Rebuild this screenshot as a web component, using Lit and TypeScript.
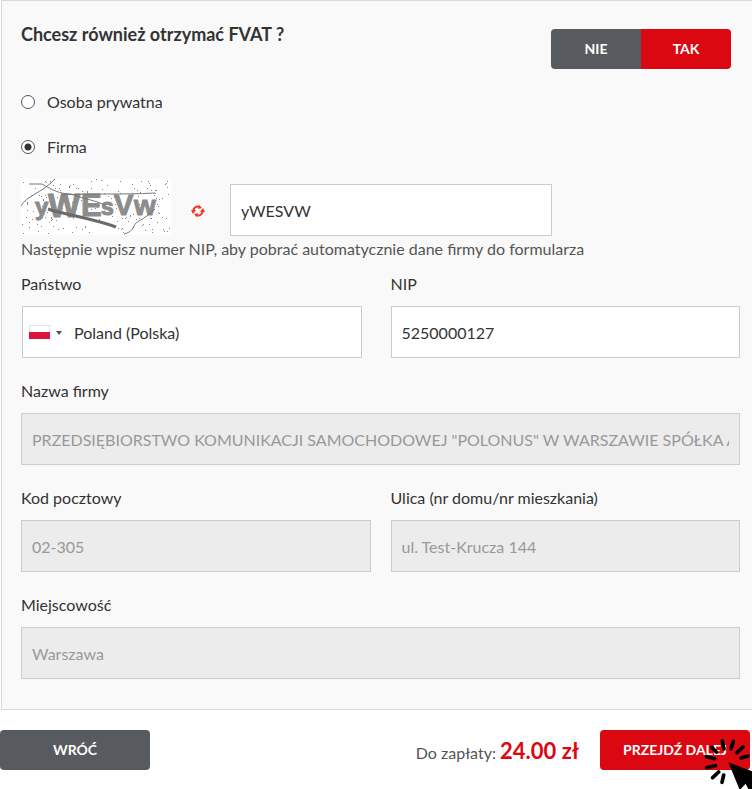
import { LitElement, html, css, svg } from "lit";
import { customElement, state } from "lit/decorators.js";

/** Seeded generator, so the captcha noise is stable between renders. */
function speckles(count: number) {
  let seed = 20477;
  const next = () => (seed = (seed * 16807) % 2147483647) / 2147483647;
  let d = "";
  for (let i = 0; i < count; i++) {
    d += `M${Math.round(next() * 148)} ${Math.round(next() * 54)}h1v1h-1z`;
  }
  return d;
}

@customElement("captcha-image")
class CaptchaImage extends LitElement {
  static styles = css`
    :host { display: block; flex: none; }
    svg { display: block; background: #fff; }
    .glyphs { font-family: "Liberation Sans", Arial, sans-serif; font-weight: 700; fill: #8c8c8c; stroke: #8c8c8c; }
    .line { fill: none; stroke: #777; }
    .bar { fill: none; stroke: #6a6a6a; stroke-width: 3; }
    .noise { fill: #888; }
  `;
  render() {
    return html`<svg width="150" height="56" viewBox="0 0 150 56" role="img" aria-label="Captcha">
      <path class="noise" d=${speckles(190)}></path>
      <g class="glyphs">
        <text x="14" y="36" font-size="24">y</text>
        <text x="27" y="38" font-size="34">W</text>
        <text x="60" y="37" font-size="31">E</text>
        <text x="80" y="36" font-size="23">s</text>
        <text x="93" y="36" font-size="29">V</text>
        <text x="113" y="36" font-size="28">w</text>
      </g>
      ${svg`
        <path class="line" d="M0 27C5 17 21 14 34 0M8 5h13c10 6 18 10 29 10 9 4 20 5 34 11M40 16c30-2 60 0 94-2M103 55c12-3 7-9 15-13 6-3 10-7 16-12"></path>
        <path class="bar" d="M27 30C45 36 70 39 95 48"></path>`}
    </svg>`;
  }
}

@customElement("app-root")
class AppRoot extends LitElement {
  static styles = css`
    * { box-sizing: border-box; }
    :host {
      display: block;
      background: #fff;
      color: #333;
      font: 16px/24px Lato, "Open Sans", sans-serif;
    }
    .panel {
      margin-left: 1px;
      padding: 20px 12px 30px 19px;
      border: 1px solid #d9d9d9;
      border-right: 0;
      background: #f9f9f9;
    }
    .head { display: flex; justify-content: space-between; padding-right: 9px; }
    h1 { margin: 0; font-size: 18px; line-height: 26px; font-weight: 700; }
    button {
      border: 0;
      padding: 0;
      height: 40px;
      border-radius: 4px;
      font: 700 14px/20px Lato, sans-serif;
      color: #fff;
      background: #575a5e;
      cursor: pointer;
    }
    .red { background: #db0812; }
    .toggle { display: flex; margin-top: 8px; }
    .toggle button { width: 90px; }
    .toggle button:first-child { border-radius: 4px 0 0 4px; }
    .toggle button:last-child { border-radius: 0 4px 4px 0; }
    .radios { display: grid; gap: 21px; margin: 21px 0 20px; border: 0; padding: 0; }
    .radio { display: flex; align-items: center; gap: 12px; }
    .radio input {
      appearance: none;
      margin: 0;
      width: 14px;
      height: 14px;
      border: 1px solid #555;
      border-radius: 50%;
      background: #fff;
    }
    .radio input:checked { background: radial-gradient(circle, #333 3px, #fff 4px); }
    .captcha { display: flex; align-items: flex-end; min-height: 57px; }
    .captcha captcha-image { align-self: flex-start; }
    .captcha .refresh { width: 54px; height: 50px; margin-right: 5px; background: none; }
    .refresh svg { display: block; margin: auto; }
    .captcha .text { width: 322px; }
    .hint { margin: 1px 0 11px; color: #555; }
    .text, .select {
      width: 100%;
      height: 52px;
      margin: 0;
      padding: 0 10px;
      border: 1px solid #ccc;
      border-radius: 0;
      background: #fff;
      color: #333;
      font: 16px/24px Lato, sans-serif;
      outline: 0;
    }
    .text:disabled { background: #ececec; color: #999; }
    .fields { display: grid; grid-template-columns: 1fr 1fr; gap: 21px 20px; }
    .field { display: grid; gap: 10px; min-width: 0; }
    .wide { grid-column: 1 / -1; }
    .country { position: relative; margin: 0 9px 0 1px; }
    .select { display: block; appearance: none; padding: 2px 10px 0 51px; }
    .flag { position: absolute; left: 7px; top: 19px; pointer-events: none; }
    .foot {
      position: relative;
      overflow: hidden;
      display: flex;
      align-items: center;
      padding: 20px 2px 19px 0;
    }
    .foot button { width: 150px; }
    .total { margin: 4px 21px 0 auto; color: #555; }
    .total strong { font-size: 22px; color: #db0812; }
    .pointer { position: absolute; right: 0; bottom: 0; pointer-events: none; }
  `;

  @state() private kind = "firma";
  @state() private invoice = true;

  private radio(value: string, label: string) {
    return html`<label class="radio">
      <input type="radio" name="kind" value=${value} .checked=${this.kind === value}
        @change=${() => (this.kind = value)} />${label}</label>`;
  }

  private locked(id: string, label: string, value: string, wide = false) {
    return html`<div class="field ${wide ? "wide" : ""}">
      <label for=${id}>${label}</label>
      <input class="text" id=${id} .value=${value} disabled />
    </div>`;
  }

  render() {
    return html`
      <section class="panel">
        <div class="head">
          <h1>Chcesz również otrzymać FVAT ?</h1>
          <div class="toggle">
            <button aria-pressed=${!this.invoice} @click=${() => (this.invoice = false)}>NIE</button>
            <button class="red" aria-pressed=${this.invoice} @click=${() => (this.invoice = true)}>TAK</button>
          </div>
        </div>
        <fieldset class="radios">
          ${this.radio("osoba", "Osoba prywatna")} ${this.radio("firma", "Firma")}
        </fieldset>
        <div class="captcha">
          <captcha-image></captcha-image>
          <button class="refresh" aria-label="Odśwież">
            <svg width="14" height="12" viewBox="0 0 14 12" fill="none" stroke="#f3342b" stroke-width="2">
              <path d="M2.7 7.5A4.5 4.5 0 0 1 9 2M11.3 4.5A4.5 4.5 0 0 1 5 10"></path>
              <path d="M0 5l5 0L2 9zM14 7H9l3-4zM8 0l3 3-4 1zM6 12L3 9l4-1z" fill="#f3342b" stroke="none"></path>
            </svg>
          </button>
          <input class="text" aria-label="Kod z obrazka" .value=${"yWESVW"} />
        </div>
        <p class="hint">Następnie wpisz numer NIP, aby pobrać automatycznie dane firmy do formularza</p>
        <div class="fields">
          <div class="field">
            <label for="country">Państwo</label>
            <div class="country">
              <select class="select" id="country"><option>Poland (Polska)</option></select>
              <svg class="flag" width="34" height="15" viewBox="0 0 34 15">
                <rect width="21" height="14" fill="#e3e3e3"></rect>
                <rect x="1" y="1" width="19" height="6" fill="#fff"></rect>
                <rect y="7" width="21" height="7" fill="#dc143c"></rect>
                <path d="M27 6h6l-3 4z" fill="#555"></path>
              </svg>
            </div>
          </div>
          <div class="field">
            <label for="nip">NIP</label>
            <input class="text" id="nip" .value=${"5250000127"} />
          </div>
          ${this.locked("name", "Nazwa firmy", 'PRZEDSIĘBIORSTWO KOMUNIKACJI SAMOCHODOWEJ "POLONUS" W WARSZAWIE SPÓŁKA AKCYJNA', true)}
          ${this.locked("zip", "Kod pocztowy", "02-305")}
          ${this.locked("street", "Ulica (nr domu/nr mieszkania)", "ul. Test-Krucza 144")}
          ${this.locked("city", "Miejscowość", "Warszawa", true)}
        </div>
      </section>
      <footer class="foot">
        <button>WRÓĆ</button>
        <p class="total">Do zapłaty: <strong>24.00 zł</strong></p>
        <button class="red">PRZEJDŹ DALEJ</button>
        <svg class="pointer" width="48" height="52" viewBox="372 111 144 156">
          <path fill="none" stroke="#000" stroke-width="11" stroke-linecap="round"
            d="M427 123l5 24M460 124l-7 22M489 141l-18 17M504 168l-21 6M395 142l14 14M380 170l24 6M380 203l26-6M398 233l18-17M426 247l5-22"></path>
          <path d="M445 187L516 214V267H505L497 251L482 267H478Z"></path>
        </svg>
      </footer>
    `;
  }
}
